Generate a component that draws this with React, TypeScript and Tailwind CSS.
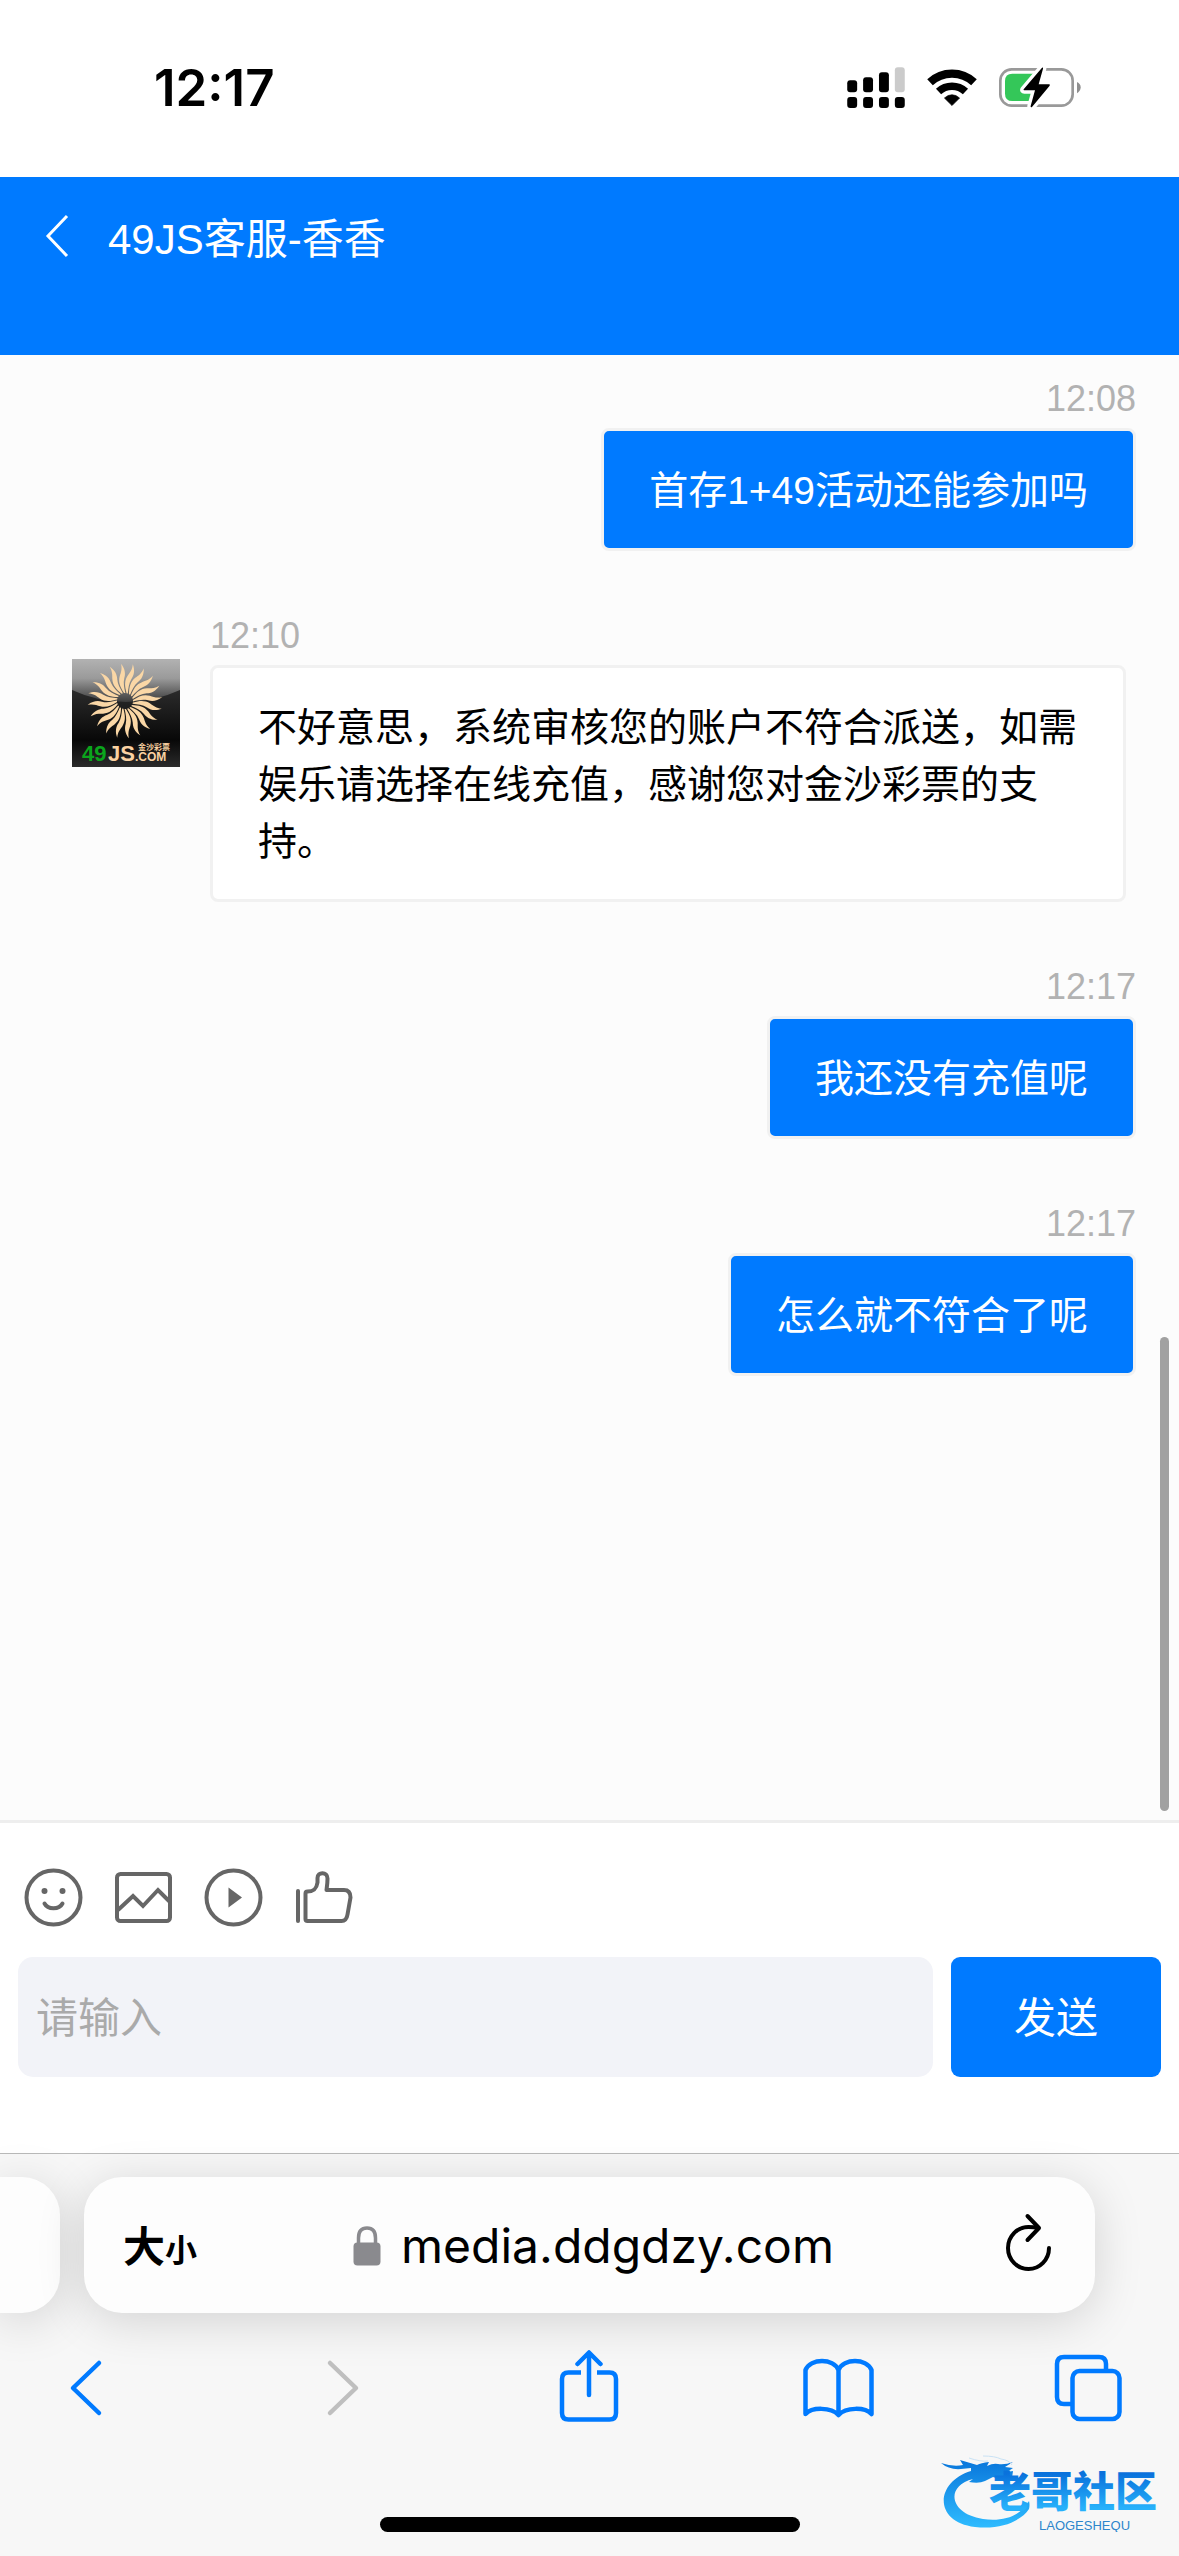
import React from "react";

type Message = { time: string; text: string; mine: boolean };

const messages: Message[] = [
  { time: "12:08", text: "首存1+49活动还能参加吗", mine: true },
  {
    time: "12:10",
    text: "不好意思，系统审核您的账户不符合派送，如需娱乐请选择在线充值，感谢您对金沙彩票的支持。",
    mine: false,
  },
  { time: "12:17", text: "我还没有充值呢", mine: true },
  { time: "12:17", text: "怎么就不符合了呢", mine: true },
];

function SignalIcon() {
  const tops = [90, 81, 66, 51];
  return (
    <svg viewBox="78 50 174 124" className="h-[41px] w-[58px]" aria-hidden="true">
      {tops.map((top, i) => (
        <g key={i}>
          <rect x={78 + i * 48} y={top} width="30" height={126 - top} rx="9" fill={i === 3 ? "#cbcbcb" : "#000"} />
          <rect x={78 + i * 48} y="141" width="30" height="33" rx="9" />
        </g>
      ))}
    </svg>
  );
}

function WifiIcon() {
  return (
    <svg viewBox="318 56 152 112" className="h-[37px] w-[50px]" fill="none" aria-hidden="true">
      <path d="M327.2 96.3A98 98 0 0 1 460.8 96.3" stroke="#000" strokeWidth="25" />
      <path d="M353.1 124.1A60 60 0 0 1 434.9 124.1" stroke="#000" strokeWidth="23" />
      <path d="M394 167L371 144Q382 134 394 134T417 144Z" fill="#000" stroke="#000" strokeWidth="2" strokeLinejoin="round" />
    </svg>
  );
}

function BatteryIcon() {
  const bolt = "M666 53L611 118Q609 121 613 121H645L632 168Q631 174 636 171L689 107Q691 103 687 103H656L669 56Q670 51 666 53Z";
  return (
    <svg viewBox="537 48 246 129" className="h-[43px] w-[82px]" fill="none" aria-hidden="true">
      <rect x="541" y="58" width="217" height="109" rx="34" stroke="#999" strokeWidth="8" />
      <path d="M577 71H652L634 153H577Q555 153 555 131V93Q555 71 577 71Z" fill="#34c759" />
      <path d="M771 96Q782 101 782 112T771 130Z" fill="#8f8f8f" />
      <path d={bolt} fill="#fff" stroke="#fff" strokeWidth="20" strokeLinejoin="round" />
      <path d={bolt} fill="#000" />
    </svg>
  );
}

function Avatar() {
  const rays = Array.from({ length: 20 }, (_, i) => i * 18 - 3);
  return (
    <svg viewBox="0 0 108 108" className="h-[108px] w-[108px] shrink-0" role="img" aria-label="49JS.COM 金沙彩票">
      <defs>
        <linearGradient id="base" x1="0" y1="0" x2="0" y2="1">
          <stop offset="0.3" stopColor="#2a2a2a" />
          <stop offset="0.75" stopColor="#080808" />
          <stop offset="1" stopColor="#2b2b2b" />
        </linearGradient>
        <linearGradient id="gloss" x1="0" y1="0" x2="0" y2="1">
          <stop offset="0" stopColor="#b2b2b2" />
          <stop offset="0.45" stopColor="#9a9a9a" />
          <stop offset="1" stopColor="#3c3c3c" />
        </linearGradient>
      </defs>
      <rect width="108" height="108" fill="url(#base)" />
      <path d="M0 0H108V31Q82 43 54 43T0 31Z" fill="url(#gloss)" />
      <g fill="#fad7a6">
        {rays.map((a) => (
          <path
            key={a}
            transform={`translate(53 42) rotate(${a})`}
            d="M-0.500 -8C-4 -14 -6 -19 -4 -25C-2.500 -29 -1 -32 -2 -37.500C2 -32 2 -27 0.500 -23C-1 -18 0 -13 0.800 -8Z"
          />
        ))}
      </g>
      <text x="10" y="102" fontSize="22" fontWeight="700" fill="#0aa51c" className="font-['Liberation_Sans',sans-serif]">49</text>
      <text x="36" y="102" fontSize="22" fontWeight="700" fill="#fbd2a2" className="font-['Liberation_Sans',sans-serif]">JS</text>
      <text x="63" y="102" fontSize="12" fontWeight="700" fill="#fbd2a2" className="font-['Liberation_Sans',sans-serif]">.COM</text>
      <text x="66" y="91" fontSize="8" fontWeight="700" fill="#fbd2a2" className="font-['Noto_Sans_CJK_SC',sans-serif]">金沙彩票</text>
    </svg>
  );
}

function SmileIcon() {
  return (
    <svg viewBox="0 0 60 60" className="h-[60px] w-[60px]" fill="none" stroke="#666" strokeWidth="4" aria-hidden="true">
      <circle cx="29.500" cy="29.500" r="27" />
      <circle cx="20.500" cy="23" r="3" fill="#666" stroke="none" />
      <circle cx="38.500" cy="23" r="3" fill="#666" stroke="none" />
      <path d="M20.500 35.500A9.700 7.500 0 0 0 38.500 35.500" strokeLinecap="round" />
    </svg>
  );
}

function PictureIcon() {
  return (
    <svg viewBox="0 0 60 60" className="h-[60px] w-[60px]" fill="none" stroke="#666" strokeWidth="4" aria-hidden="true">
      <rect x="3" y="6" width="53" height="47" rx="3.500" />
      <path d="M4 42L19 28L29 38L44 22L56 34" />
    </svg>
  );
}

function PlayIcon() {
  return (
    <svg viewBox="0 0 60 60" className="h-[60px] w-[60px]" fill="none" stroke="#666" strokeWidth="4" aria-hidden="true">
      <circle cx="29.500" cy="29.500" r="27" />
      <path d="M24.500 19.500L38 29.500L24.500 39.500Z" fill="#666" stroke="none" />
    </svg>
  );
}

function ThumbIcon() {
  return (
    <svg viewBox="0 0 60 60" className="h-[60px] w-[60px]" fill="none" stroke="#666" strokeWidth="4" strokeLinejoin="round" aria-hidden="true">
      <path d="M4 23V53" strokeLinecap="round" />
      <path d="M11.500 25.500Q11.500 23.500 13.500 23.500C20 23.500 22.500 21 23.500 14.500V10C23.500 3.500 33.500 3.500 33.500 10.500C33.500 15 33 18 32.500 22H50Q56.500 22 56.500 29.500L53.500 46.500Q52.500 53 47.500 53H13.500Q11.500 53 11.500 51Z" />
    </svg>
  );
}

function LockIcon() {
  return (
    <svg viewBox="0 0 28 40" className="h-10 w-7 shrink-0" aria-hidden="true">
      <path d="M5.500 19V12Q5.500 2 14 2T22.500 12V19" fill="none" stroke="#8a8a8e" strokeWidth="3.500" />
      <rect x="0.500" y="16.500" width="27" height="23" rx="4" fill="#8a8a8e" />
    </svg>
  );
}

function ReloadIcon() {
  return (
    <svg viewBox="0 0 46 60" className="h-[60px] w-[46px]" fill="none" stroke="#000" strokeWidth="4" strokeLinecap="round" strokeLinejoin="round" aria-hidden="true">
      <path d="M43 35A20.500 21 0 1 1 22.500 14Q28 14 32 15" />
      <path d="M21.500 3L33 15L21.500 27" />
    </svg>
  );
}

const toolIcon = "h-[72px] w-[72px]";

function BrowserIcon({ name }: { name: string }) {
  const shared = {
    viewBox: "0 0 72 72",
    className: toolIcon,
    fill: "none",
    stroke: "currentColor",
    strokeWidth: 4.5,
    strokeLinecap: "round" as const,
    strokeLinejoin: "round" as const,
    "aria-hidden": true,
  };
  if (name === "后退") return <svg {...shared}><path d="M49 13L23 38L49 63" /></svg>;
  if (name === "前进") return <svg {...shared}><path d="M29 13L55 38L29 63" /></svg>;
  if (name === "分享")
    return (
      <svg {...shared}>
        <path d="M30 22.500H17.500Q11 22.500 11 29V63Q11 69.500 17.500 69.500H58.500Q65 69.500 65 63V29Q65 22.500 58.500 22.500H46" strokeLinecap="butt" />
        <path d="M38 45V3M26.500 14L38 2.500L49.500 14" />
      </svg>
    );
  if (name === "书签")
    return (
      <svg {...shared}>
        <path d="M36.500 20C31 8 9 8 3.500 20V64C10 57 29 57 36.500 65C44 57 63 57 69.500 64V20C64 8 42 8 36.500 20V65" />
      </svg>
    );
  return (
    <svg {...shared}>
      <path d="M19 54H12Q5 54 5 47V14Q5 7 12 7H47Q54 7 54 14V20" strokeLinecap="butt" />
      <rect x="20.500" y="21" width="47" height="48" rx="7" />
    </svg>
  );
}

function CommunityLogo() {
  return (
    <svg viewBox="0 0 222 78" className="h-[78px] w-[222px]" role="img" aria-label="老哥社区 LAOGESHEQU">
      <defs>
        <linearGradient id="sea" gradientUnits="userSpaceOnUse" x1="0" y1="8" x2="0" y2="74">
          <stop offset="0" stopColor="#0a78dc" />
          <stop offset="1" stopColor="#2fbcff" />
        </linearGradient>
        <linearGradient id="word" gradientUnits="userSpaceOnUse" x1="0" y1="20" x2="0" y2="54">
          <stop offset="0" stopColor="#0a72dc" />
          <stop offset="1" stopColor="#27b1fb" />
        </linearGradient>
      </defs>
      <path
        fill="url(#sea)"
        d="M30 17C-6 28 -8 68 34 73C60 76 80 67 88 55Q89 51 88 47C80 62 62 68 42 65C8 60 4 32 32 25L28 28Q38 30 44 27L52 23L58 25L68 21L62 28L71 24L72 17L66 18L72 14L64 13L72 8Q64 11 57 10Q52 9 46 12L48 8Q40 9 36 11L19 6L22 11Q12 13 0 9Q8 16 20 15L30 14Z"
      />
      <path d="M28 4Q40 8 47 7M42 2Q54 2 60 5Q68 6 71 11" fill="none" stroke="#c9e2f5" strokeWidth="1" />
      <text x="48" y="53" fontSize="42" fontWeight="900" fill="url(#word)" className="font-['Noto_Sans_CJK_SC',sans-serif]">老哥社区</text>
      <text x="98" y="76" fontSize="13" fill="#2c86cc" className="font-['Liberation_Sans',sans-serif]">LAOGESHEQU</text>
    </svg>
  );
}

function MessageItem({ message }: { message: Message }) {
  const bubble = message.mine ? "bg-[#007aff] text-white" : "bg-white text-black";
  return (
    <li className={message.mine ? "flex justify-end pr-[43px]" : "flex items-start gap-[30px] pl-[72px] pr-[53px]"}>
      {!message.mine && <div className="pt-11"><Avatar /></div>}
      <div className={message.mine ? "flex flex-col items-end" : "flex min-w-0 flex-col items-start"}>
        <time className="mb-2 text-[36px] leading-[42px] text-[#b2b2b2]">{message.time}</time>
        <p className={`rounded-lg border-[3px] border-[#f1f1f1] px-[45px] pt-[31px] pb-[29px] text-[39px] leading-[57px] ${bubble}`}>
          {message.text}
        </p>
      </div>
    </li>
  );
}

export default function App() {
  const tools = [
    { name: "表情", icon: <SmileIcon /> },
    { name: "图片", icon: <PictureIcon /> },
    { name: "视频", icon: <PlayIcon /> },
    { name: "点赞", icon: <ThumbIcon /> },
  ];
  return (
    <div className="relative flex min-h-screen flex-col overflow-hidden bg-white font-['Liberation_Sans','Noto_Sans_CJK_SC',sans-serif]">
      <div className="flex h-[177px] items-center justify-between pr-[98px] pb-[2px] pl-[154px]">
        <span className="font-['Inter',sans-serif] text-[51px] leading-[60px] font-semibold">12:17</span>
        <div className="flex items-center gap-[22px]">
          <SignalIcon />
          <WifiIcon />
          <BatteryIcon />
        </div>
      </div>

      <header className="flex h-[178px] items-start bg-[#007aff] pt-8 pl-[45px] text-white">
        <button type="button" aria-label="返回" className="flex h-[54px] w-[63px] items-center">
          <svg viewBox="0 0 24 44" className="h-11 w-6" fill="none" stroke="currentColor" strokeWidth="3" aria-hidden="true">
            <path d="M22 2L3 22L22 42" />
          </svg>
        </button>
        <h1 className="text-[42px] leading-[62px]">49JS客服-香香</h1>
      </header>

      <main className="relative flex-1 bg-[#fcfcfc] pt-[23px]">
        <ul className="flex flex-col gap-16">
          {messages.map((m, i) => (
            <MessageItem key={i} message={m} />
          ))}
        </ul>
        <div className="absolute right-[10px] bottom-[9px] h-[474px] w-[9px] rounded-full bg-[#a1a1a1]" />
      </main>

      <form className="border-t-[3px] border-[#eee] bg-white px-[18px] pt-[45px] pb-[76px]" onSubmit={(e) => e.preventDefault()}>
        <div className="mb-[29px] flex gap-[30px] pl-[6px]">
          {tools.map((t) => (
            <button key={t.name} type="button" aria-label={t.name}>{t.icon}</button>
          ))}
        </div>
        <div className="flex gap-[18px]">
          <input
            aria-label="请输入"
            placeholder="请输入"
            className="h-[120px] min-w-0 flex-1 rounded-[15px] bg-[#f2f3f8] px-[18px] pt-[3px] text-[42px] placeholder:text-[#aaa]"
          />
          <button type="submit" className="h-[120px] w-[210px] rounded-[9px] bg-[#007aff] pt-[3px] text-[42px] text-white">发送</button>
        </div>
      </form>

      <footer className="relative border-t border-[#b9b9b9] bg-[#f7f7f7] pt-[23px] pb-6">
        <div className="flex gap-6 pr-[84px]">
          <div className="h-[136px] w-[60px] rounded-r-[38px] bg-[#fdfdfd] shadow-[0_8px_48px_rgba(0,0,0,0.15)]" />
          <div className="flex h-[136px] flex-1 items-center justify-between rounded-[38px] bg-[#fdfdfd] pr-[43px] pl-[39px] shadow-[0_8px_48px_rgba(0,0,0,0.15)]">
            <button type="button" aria-label="大小" className="flex w-[74px] items-baseline pt-[2px] font-['Noto_Sans_CJK_SC',sans-serif] leading-[60px] font-bold">
              <span className="text-[42px]">大</span>
              <span className="text-[32px]">小</span>
            </button>
            <button type="button" className="flex items-center gap-5 pt-[2px] pl-3">
              <LockIcon />
              <span className="font-['Inter',sans-serif] text-[48px] leading-[60px]">media.ddgdzy.com</span>
            </button>
            <button type="button" aria-label="重新加载" className="flex w-[74px] justify-end pb-[4px]"><ReloadIcon /></button>
          </div>
        </div>
        <nav className="mt-[37px] flex justify-between pr-[55px] pl-[50px] text-[#007aff]">
          <button type="button" aria-label="后退"><BrowserIcon name="后退" /></button>
          <button type="button" aria-label="前进" disabled className="text-[#bfbfbf]"><BrowserIcon name="前进" /></button>
          <button type="button" aria-label="分享"><BrowserIcon name="分享" /></button>
          <button type="button" aria-label="书签"><BrowserIcon name="书签" /></button>
          <button type="button" aria-label="标签页"><BrowserIcon name="标签页" /></button>
        </nav>
        <div className="mx-auto mt-[95px] h-[15px] w-[420px] rounded-full bg-black" />
        <div className="absolute right-[16px] bottom-[24px]"><CommunityLogo /></div>
      </footer>
    </div>
  );
}
